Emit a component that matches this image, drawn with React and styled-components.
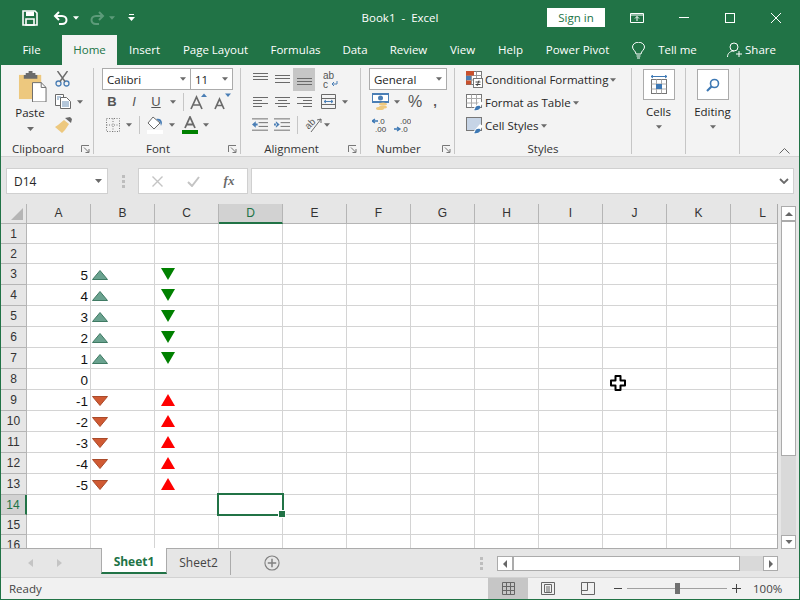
import React from 'react';
import styled, { createGlobalStyle } from 'styled-components';

const GREEN = '#217346';

const Global = createGlobalStyle`
  html, body { margin: 0; padding: 0; background: #e6e6e6; }
  * { box-sizing: border-box; }
  body { font-family: "Open Sans", "Noto Sans", "Liberation Sans", sans-serif; font-size: 11.5px; color: #262626; }
`;

const Win = styled.div`
  width: 800px;
  height: 600px;
  overflow: hidden;
  display: flex;
  flex-direction: column;
  border: 1px solid ${GREEN};
  border-top: 0;
  background: #e6e6e6;
`;

/* title bar */
const TitleBar = styled.div`
  height: 35px;
  background: ${GREEN};
  color: #fff;
  display: grid;
  grid-template-columns: 300px 1fr 300px;
  align-items: center;
`;
const Qat = styled.div`
  display: flex;
  align-items: center;
  padding-left: 21px;
  gap: 4px;
`;
const Title = styled.div`
  text-align: center;
  white-space: pre;
`;
const WinCtl = styled.div`
  display: flex;
  align-items: center;
  justify-content: flex-end;
  padding-right: 18px;
`;
const SignIn = styled.div`
  width: 58px;
  height: 19px;
  background: #fff;
  color: ${GREEN};
  text-align: center;
  line-height: 19px;
  margin-right: 25px;
`;

/* tab bar */
const TabBar = styled.div`
  height: 30px;
  background: ${GREEN};
  color: #fff;
  display: flex;
  align-items: center;
`;
const Tab = styled.div`
  height: 30px;
  width: ${p => p.$w}px;
  line-height: 30px;
  text-align: center;
  white-space: nowrap;
  flex: none;
  background: ${p => (p.$active ? '#f3f3f3' : 'transparent')};
  color: ${p => (p.$active ? GREEN : '#fff')};
`;

/* ribbon */
const Ribbon = styled.div`
  height: 92px;
  background: #f3f3f3;
  border-bottom: 1px solid #d2d2d2;
  display: flex;
  padding-top: 3px;
`;
const Group = styled.div`
  width: ${p => p.$w}px;
  flex: none;
  height: 86px;
  border-right: 1px solid #c6c6c6;
  display: flex;
  flex-direction: column;
  position: relative;
`;
const GroupBody = styled.div`
  flex: 1;
  min-height: 0;
  display: flex;
`;
const GroupLabel = styled.div`
  height: 14px;
  line-height: 18px;
  text-align: center;
  padding-right: ${p => (p.$launch ? 18 : 0)}px;
  color: #333;
`;
const Launcher = styled.svg`
  position: absolute;
  right: 3px;
  bottom: 1px;
`;
const PasteBtn = styled.div`
  width: 44px;
  margin-left: 7px;
  display: flex;
  flex-direction: column;
  align-items: center;
  padding-top: 3px;
`;
const PasteArt = styled.svg`
  margin-left: 4px;
`;
const PasteLabel = styled.div`
  margin: 2px 0 5px;
  line-height: 18px;
`;
const ClipColumn = styled.div`
  padding-left: 2px;
  display: flex;
  flex-direction: column;
`;
const Row = styled.div`
  height: ${p => p.$h || 23}px;
  display: flex;
  align-items: center;
  padding-left: ${p => p.$pl || 0}px;
`;
const Stack = styled.div`
  display: flex;
  flex-direction: column;
  padding-left: ${p => p.$pl || 0}px;
`;
const IconSlot = styled.div`
  width: ${p => p.$w || 22}px;
  height: ${p => p.$h || 22}px;
  flex: none;
  display: flex;
  align-items: center;
  justify-content: center;
  background: ${p => (p.$on ? '#c6c6c6' : 'transparent')};
`;
const Combo = styled.div`
  width: ${p => p.$w}px;
  height: 22px;
  flex: none;
  background: #fff;
  border: 1px solid #ababab;
  margin-left: ${p => (p.$join ? -1 : 0)}px;
  display: flex;
  align-items: center;
  justify-content: space-between;
  padding: 0 4px;
  color: #222;
`;
const VSep = styled.div`
  width: 1px;
  height: 18px;
  background: #c6c6c6;
  margin: 0 ${p => p.$r}px 0 ${p => p.$l}px;
  flex: none;
`;
const Letter = styled.span`
  font-family: "Liberation Sans", sans-serif;
  font-size: ${p => p.$s || 13}px;
  font-weight: ${p => (p.$b ? 700 : 400)};
  font-style: ${p => (p.$i ? 'italic' : 'normal')};
  text-decoration: ${p => (p.$u ? 'underline' : 'none')};
  color: #555;
`;
const StyleRow = styled.div`
  height: 23px;
  display: flex;
  align-items: center;
  gap: 2px;
  padding-left: 11px;
  white-space: nowrap;
`;
const BigBtn = styled.div`
  flex: 1;
  display: flex;
  flex-direction: column;
  align-items: center;
  padding-top: 1px;
`;
const BigIcon = styled.div`
  width: 32px;
  height: 31px;
  background: #fff;
  border: 1px solid #ababab;
  display: flex;
  align-items: center;
  justify-content: center;
`;
const BigText = styled.div`
  margin: 3px 0 4px;
  line-height: 18px;
`;
const RibbonEnd = styled.div`
  flex: 1;
  display: flex;
  align-items: flex-end;
  justify-content: flex-end;
  padding: 0 9px 2px 0;
`;

/* formula bar */
const FormulaBar = styled.div`
  height: 47px;
  display: flex;
  align-items: flex-start;
  padding: 11px 5px 0 5px;
`;
const NameBox = styled.div`
  width: 102px;
  height: 26px;
  background: #fff;
  border: 1px solid #d0d0d0;
  display: flex;
  align-items: center;
  justify-content: space-between;
  padding: 0 5px 0 7px;
  font-size: 12px;
`;
const Dots = styled.div`
  width: 30px;
  height: 26px;
  display: flex;
  align-items: center;
  justify-content: center;
`;
const FxBox = styled.div`
  width: 110px;
  height: 26px;
  background: #fff;
  border: 1px solid #d0d0d0;
  display: flex;
  align-items: center;
`;
const FxSlot = styled.div`
  flex: 1;
  display: flex;
  justify-content: center;
  align-items: center;
`;
const FxText = styled.span`
  font-family: "Liberation Serif", serif;
  font-style: italic;
  font-weight: 700;
  font-size: 13px;
  color: #6a6a6a;
`;
const FormulaInput = styled.div`
  flex: 1;
  height: 26px;
  margin-left: 3px;
  background: #fff;
  border: 1px solid #d0d0d0;
  display: flex;
  align-items: center;
  justify-content: flex-end;
  padding-right: 4px;
`;

/* sheet */
const SheetArea = styled.div`
  height: 345px;
  display: flex;
`;
const SheetClip = styled.div`
  width: 777px;
  height: 345px;
  overflow: hidden;
  position: relative;
  flex: none;
  border-right: 1px solid #ababab;
  border-bottom: 1px solid #ababab;
`;
const Sheet = styled.div`
  display: grid;
  grid-template-columns: 26px repeat(12, 64px);
  grid-template-rows: 20px 20px 20px repeat(11, 21px) 20px 20px 20px;
  width: 794px;
  background: #fff;
`;
const Corner = styled.div`
  background: #e6e6e6;
  border-right: 1px solid #b5b5b5;
  border-bottom: 1px solid #b5b5b5;
  display: flex;
  align-items: flex-end;
  justify-content: flex-end;
  padding: 0 3px 3px 0;
`;
const ColHead = styled.div`
  background: ${p => (p.$sel ? '#d2d2d2' : '#e6e6e6')};
  border-right: 1px solid #b5b5b5;
  border-bottom: ${p => (p.$sel ? `2px solid ${GREEN}` : '1px solid #b5b5b5')};
  color: ${p => (p.$sel ? GREEN : '#333')};
  text-align: center;
  line-height: 19px;
  font-family: "Liberation Sans", sans-serif;
  font-size: 12px;
`;
const RowHead = styled.div`
  background: ${p => (p.$sel ? '#d2d2d2' : '#e6e6e6')};
  border-right: ${p => (p.$sel ? `2px solid ${GREEN}` : '1px solid #b5b5b5')};
  border-bottom: 1px solid #b5b5b5;
  color: ${p => (p.$sel ? GREEN : '#333')};
  display: flex;
  align-items: center;
  justify-content: center;
  font-family: "Liberation Sans", sans-serif;
  font-size: 12px;
`;
const Cell = styled.div`
  border-right: 1px solid #d4d4d4;
  border-bottom: 1px solid #d4d4d4;
  position: relative;
  display: flex;
  align-items: flex-end;
  justify-content: flex-end;
  padding: 0 2px 0 0;
  font-family: "Liberation Sans", sans-serif;
  font-size: 13.5px;
  line-height: 16px;
  color: #111;
`;
const CfIcon = styled.svg`
  position: absolute;
  left: ${p => p.$x}px;
  top: ${p => p.$y}px;
`;
const Selection = styled.div`
  position: absolute;
  left: 216px;
  top: 289px;
  width: 67px;
  height: 23px;
  border: 2px solid ${GREEN};
  &::after {
    content: '';
    position: absolute;
    right: -4px;
    bottom: -4px;
    width: 6px;
    height: 6px;
    background: ${GREEN};
    border: 1px solid #fff;
  }
`;
const Pointer = styled.svg`
  position: absolute;
  left: 609px;
  top: 171px;
`;

/* vertical scrollbar */
const VScroll = styled.div`
  flex: 1;
  display: flex;
  flex-direction: column;
  padding: 2px 3px 0 3px;
  height: 345px;
`;
const SBtn = styled.div`
  flex: none;
  width: ${p => p.$w || 15}px;
  height: ${p => p.$h || 15}px;
  background: #fff;
  border: 1px solid #ababab;
  display: flex;
  align-items: center;
  justify-content: center;
`;
const VTrack = styled.div`
  flex: 1;
  background: #d9d9d9;
`;
const VThumb = styled.div`
  height: 235px;
  background: #fff;
  border: 1px solid #ababab;
`;

/* sheet tabs */
const TabStrip = styled.div`
  height: 28px;
  display: flex;
  align-items: flex-start;
`;
const NavArea = styled.div`
  width: 100px;
  height: 28px;
  display: flex;
  align-items: center;
  padding-left: 27px;
  gap: 24px;
`;
const SheetTab = styled.div`
  width: ${p => p.$w}px;
  height: ${p => (p.$active ? 26 : 24)}px;
  flex: none;
  text-align: center;
  line-height: ${p => (p.$active ? 27 : 23)}px;
  font-size: 12px;
  white-space: nowrap;
  background: ${p => (p.$active ? '#fff' : 'transparent')};
  color: ${p => (p.$active ? GREEN : '#444')};
  font-weight: ${p => (p.$active ? 700 : 400)};
  border-left: ${p => (p.$active ? '1px solid #ababab' : '0')};
  border-right: 1px solid #ababab;
  border-bottom: ${p => (p.$active ? `2px solid ${GREEN}` : '0')};
  margin-top: ${p => (p.$active ? -1 : 2)}px;
  position: relative;
`;
const AddSheet = styled.div`
  width: 249px;
  height: 28px;
  display: flex;
  align-items: center;
  padding-left: 33px;
  flex: none;
`;
const TabDots = styled.div`
  width: 17px;
  height: 28px;
  display: flex;
  align-items: center;
`;
const HScroll = styled.div`
  width: 281px;
  height: 15px;
  margin-top: 7px;
  display: flex;
  background: #d9d9d9;
  flex: none;
`;
const HThumb = styled.div`
  width: 227px;
  background: #fff;
  border: 1px solid #ababab;
  flex: none;
`;
const HTrack = styled.div`
  flex: 1;
`;

/* status bar */
const StatusBar = styled.div`
  flex: 1;
  background: #f1f1f1;
  border-top: 1px solid #d2d2d2;
  display: flex;
  align-items: center;
  color: #444;
  padding-left: 8px;
`;
const Ready = styled.div`
  width: 479px;
  flex: none;
`;
const ViewBtn = styled.div`
  width: 40px;
  height: 21px;
  flex: none;
  display: flex;
  align-items: center;
  justify-content: center;
  background: ${p => (p.$on ? '#c6c6c6' : 'transparent')};
`;
const Zoom = styled.div`
  display: flex;
  align-items: center;
  margin-left: 6px;
  flex: none;
`;
const Slider = styled.div`
  width: 100px;
  height: 1px;
  background: #a0a0a0;
  position: relative;
  margin: 0 5px;
`;
const SliderKnob = styled.div`
  position: absolute;
  left: 48px;
  top: -5px;
  width: 5px;
  height: 11px;
  background: #707070;
`;
const ZoomPct = styled.div`
  margin-left: 12px;
  white-space: nowrap;
`;

const Caret = ({ c = '#6a6a6a', w = 7 }) => (
  <svg width={w} height="4" viewBox="0 0 7 4"><path d="M0 0h7L3.5 4z" fill={c} /></svg>
);

const Lines = ({ rows, w = 15, c = '#6a6a6a' }) => (
  <svg width={w} height="14" viewBox={`0 0 ${w} 14`}>
    {rows.map(([x, y, l], i) => <rect key={i} x={x} y={y} width={l} height="1" fill={c} />)}
  </svg>
);

const Launch = () => (
  <Launcher width="9" height="8" viewBox="0 0 9 8">
    <path d="M.5 7V.5H8M3 2.500l4.500 4.500M8 4v3.500H4.500" fill="none" stroke="#777" />
  </Launcher>
);

const Save = () => (
  <svg width="16" height="16" viewBox="0 0 16 16">
    <path d="M1 1h12l2 2v12H1z" fill="none" stroke="#fff" strokeWidth="1.6" />
    <path d="M4 1.5h8v4.5H4z" fill="#fff" />
    <path d="M4 9h8v6H4z" fill="none" stroke="#fff" strokeWidth="1.6" />
  </svg>
);

const Undo = ({ c = '#fff', flip }) => (
  <svg width="16" height="14" viewBox="0 0 16 14">
    <g transform={flip ? 'translate(16 0) scale(-1 1)' : undefined}>
      <path d="M6 1L2 5l4 4" fill="none" stroke={c} strokeWidth="2" />
      <path d="M2 5h7c6 0 6 8 0 8H6" fill="none" stroke={c} strokeWidth="2" />
    </g>
  </svg>
);

const PasteIcon = () => (
  <PasteArt width="29" height="31" viewBox="0 0 30 32">
    <path d="M1 4h23v25H1z" fill="#edc87e" />
    <path d="M8 4V2h3V0h4v2h3v2h2v4H6V4z" fill="#6b6b6b" />
    <path d="M15 12h9l5 5v15H15z" fill="#fff" stroke="#6b6b6b" />
    <path d="M24 12v5h5" fill="none" stroke="#6b6b6b" />
  </PasteArt>
);

const CutIcon = () => (
  <svg width="15" height="16" viewBox="0 0 15 16">
    <circle cx="3.5" cy="12.5" r="2.5" fill="none" stroke="#4a7eb5" strokeWidth="1.3" />
    <circle cx="11.5" cy="12.5" r="2.5" fill="none" stroke="#4a7eb5" strokeWidth="1.3" />
    <path d="M2.5 0l7.5 10.5M12.5 0L5 10.5" stroke="#6a6a6a" strokeWidth="1.4" />
  </svg>
);

const CopyIcon = () => (
  <svg width="16" height="15" viewBox="0 0 16 15">
    <path d="M.5.5h8v11h-8z" fill="#fff" stroke="#6a6a6a" />
    <path d="M5.5 3.5h6l4 4v7h-10z" fill="#fff" stroke="#6a6a6a" />
    <path d="M7 8h7M7 10h7M7 12h7M2 3h4M2 5h2" stroke="#6a8fb5" />
  </svg>
);

const Brush = () => (
  <svg width="17" height="16" viewBox="0 0 17 16">
    <path d="M10 1l5-1 2 2-1 4z" fill="#6a6a6a" />
    <path d="M9 3l5 4-4 6-3 3-7-6 3-2z" fill="#edc87e" />
  </svg>
);

const BordersIcon = () => (
  <svg width="14" height="14" viewBox="0 0 14 14">
    <path d="M.5.5h13v13H.5zM7 .5v13M.5 7h13" fill="none" stroke="#777" strokeDasharray="1 1.500" />
  </svg>
);

const FillIcon = () => (
  <svg width="16" height="18" viewBox="0 0 16 18">
    <path d="M6 1l7 6-6 6-6-6z" fill="#fff" stroke="#6a6a6a" />
    <path d="M9 3c3-1 6 0 6 4l-1 3-1-4z" fill="#4a7eb5" />
    <rect x="0" y="14" width="16" height="4" fill="#fff" />
  </svg>
);

const FontColor = () => (
  <svg width="16" height="18" viewBox="0 0 16 18">
    <path d="M3 12L8 1l5 11M5 8.5h6" fill="none" stroke="#6a6a6a" strokeWidth="1.8" />
    <rect x="0" y="14" width="16" height="4" fill="#008000" />
  </svg>
);

const GrowFont = ({ up }) => (
  <svg width="20" height="17" viewBox="0 0 20 17">
    <path d={up ? 'M1 16L6.5 4 12 16M3.5 12h6' : 'M3 16L7.5 6 12 16M5 12.5h5'} fill="none" stroke="#6a6a6a" strokeWidth="1.7" />
    <path d={up ? 'M11 4l3-3.5L17 4z' : 'M13 .5h6L16 4z'} fill="#4a7eb5" />
  </svg>
);

const WrapIcon = () => (
  <svg width="16" height="20" viewBox="0 0 16 20">
    <text fontFamily="Liberation Sans" fontSize="10" fill="#555">
      <tspan x="0" y="10">ab</tspan>
      <tspan x="0" y="18.500">c</tspan>
    </text>
    <path d="M14 12v3H9m2-2l-2 2 2 2" fill="none" stroke="#4a7eb5" />
  </svg>
);

const MergeIcon = () => (
  <svg width="15" height="15" viewBox="0 0 15 15">
    <path d="M.5.5h14v14H.5zM.5 4.5h14M.5 10.5h14" fill="none" stroke="#6a6a6a" />
    <path d="M3 7.5h9M3 7.5L5 6M3 7.5L5 9M12 7.5L10 6M12 7.5L10 9" stroke="#4a7eb5" fill="none" />
  </svg>
);

const IndentIcon = ({ out }) => (
  <svg width="16" height="14" viewBox="0 0 17 14">
    <path d="M0 .5h17M7 4.5h10M7 8.5h10M0 12.5h17" stroke="#6a6a6a" />
    <path d={out ? 'M0 6.5L4 3v7zM3 5.5h3v2H3z' : 'M6 6.5L2 3v7zM0 5.5h3v2H0z'} fill="#4a7eb5" />
  </svg>
);

const OrientIcon = () => (
  <svg width="16" height="18" viewBox="0 0 16 18" overflow="visible">
    <text x="0" y="11" fontFamily="Liberation Sans" fontSize="9.500" fill="#555" transform="rotate(-45 5 8)">ab</text>
    <path d="M6 16L16 3M16 3l-4 1M16 3v4" fill="none" stroke="#6a6a6a" />
  </svg>
);

const CurrencyIcon = () => (
  <svg width="17" height="17" viewBox="0 0 17 17">
    <rect x=".5" y=".5" width="16" height="9" fill="#fff" stroke="#4a7eb5" />
    <path d="M0 0h17v2H0zM0 8h17v2H0z" fill="#4a7eb5" />
    <circle cx="8.5" cy="5" r="2.5" fill="#4a7eb5" />
    <ellipse cx="11" cy="11" rx="4" ry="1.6" fill="#edc87e" />
    <ellipse cx="11" cy="14" rx="4" ry="1.6" fill="#edc87e" />
    <ellipse cx="8" cy="15.4" rx="4" ry="1.6" fill="#edc87e" />
  </svg>
);

const DecimalIcon = ({ more }) => (
  <svg width="17" height="16" viewBox="0 0 17 16">
    <text x="6" y="7" fontFamily="Liberation Sans" fontSize="8" fill="#444">{more ? '.00' : '.0'}</text>
    <text x={more ? 7 : 3} y="15" fontFamily="Liberation Sans" fontSize="8" fill="#444">{more ? '.0' : '.00'}</text>
    <path d={more ? 'M0 12h5M3 10l3 2-3 2' : 'M1 4h5M3 2L0 4l3 2'} fill="none" stroke="#3d78b4" strokeWidth="1.3" />
  </svg>
);

const CondFmtIcon = () => (
  <svg width="17" height="17" viewBox="0 0 17 17">
    <rect x=".5" y=".5" width="15" height="13" fill="#fff" stroke="#777" />
    <path d="M.5 4.5h15M.5 9h15M5.5.5v13M10.5.5v13" stroke="#999" fill="none" />
    <rect x="0" y="0" width="8" height="4.5" fill="#c8502d" />
    <rect x="0" y="5" width="5" height="4" fill="#4a7eb5" />
    <rect x="0" y="9.5" width="5" height="4" fill="#c8502d" />
    <rect x="7.5" y="7.5" width="9" height="9" fill="#fff" stroke="#777" />
    <path d="M9.5 11h5M9.5 13.5h5M13 9.5l-2 5.5" stroke="#444" fill="none" />
  </svg>
);

const TableIcon = ({ cell }) => (
  <svg width="17" height="17" viewBox="0 0 17 17">
    <rect x=".5" y=".5" width="15" height="13" fill={cell ? '#c6d4e6' : '#fff'} stroke="#777" />
    {!cell && <path d="M.5 4.5h15M.5 9h15M5.5.5v13M10.5.5v13" stroke="#aaa" fill="none" />}
    <path d="M7 15l7-8 3 2-6 8z" fill="#fff" />
    <path d="M9 15c0-3 3-4 5-3 1 2-1 5-6 4z" fill="#3d78b4" />
  </svg>
);

const CellsIcon = () => (
  <svg width="20" height="20" viewBox="0 0 20 20">
    <path d="M2 1.5h16M2 1.5L4 0M2 1.5L4 3M18 1.5L16 0M18 1.5L16 3" stroke="#3d78b4" fill="none" />
    <rect x="2.5" y="4.5" width="15" height="14" fill="#fff" stroke="#777" />
    <path d="M2.5 9h15M2.5 14h15M7.5 4.5v14M12.5 4.5v14" stroke="#aaa" />
    <rect x="7" y="9" width="6" height="5" fill="#3d78b4" />
  </svg>
);

const SearchIcon = () => (
  <svg width="14" height="14" viewBox="0 0 14 14">
    <circle cx="8.5" cy="5.5" r="4" fill="none" stroke="#3d78b4" strokeWidth="1.6" />
    <path d="M5.5 8.5L1 13" stroke="#3d78b4" strokeWidth="2.2" />
  </svg>
);

const cols = 'ABCDEFGHIJKL'.split('');
const rows = Array.from({ length: 16 }, (_, i) => i + 1);
const values = { 3: 5, 4: 4, 5: 3, 6: 2, 7: 1, 8: 0, 9: -1, 10: -2, 11: -3, 12: -4, 13: -5 };

function cellContent(r, c) {
  const v = values[r];
  if (v === undefined) return null;
  if (c === 'A') return v;
  if (v === 0) return null;
  if (c === 'B') {
    return (
      <CfIcon $x={1} $y={6} width="16" height="10" viewBox="0 0 16 10">
        {v > 0
          ? <path d="M8 .5L15.5 9.5H.5z" fill="#6aa28f" stroke="#3f7a63" />
          : <path d="M.5.5h15L8 9.500z" fill="#d05a33" stroke="#a94a2a" />}
      </CfIcon>
    );
  }
  if (c === 'C') {
    return (
      <CfIcon $x={6} $y={4} width="14" height="12" viewBox="0 0 14 12">
        {v > 0
          ? <path d="M0 0h14L7 12z" fill="#008000" />
          : <path d="M7 0l7 12H0z" fill="#ff0000" />}
      </CfIcon>
    );
  }
  return null;
}

export default function App() {
  return (
    <>
      <Global />
      <Win>
        <TitleBar>
          <Qat>
            <Save />
            <IconSlot $w={7} />
            <Undo />
            <Caret c="#fff" w={6} />
            <IconSlot $w={2} />
            <Undo flip c="#5d9b7a" />
            <Caret c="#5d9b7a" w={6} />
            <IconSlot $w={5} />
            <svg width="7" height="7" viewBox="0 0 7 7"><path d="M1 0h5v1H1zM0 3h7L3.5 7z" fill="#fff" /></svg>
          </Qat>
          <Title>Book1  -  Excel</Title>
          <WinCtl>
            <SignIn>Sign in</SignIn>
            <svg width="14" height="10" viewBox="0 0 14 10">
              <path d="M.5.5h13v9H.5zM.5 2h13M7 8V3.5M5 5.5l2-2 2 2" fill="none" stroke="#fff" />
            </svg>
            <IconSlot $w={35} />
            <svg width="10" height="1" viewBox="0 0 10 1"><rect width="10" height="1" fill="#fff" /></svg>
            <IconSlot $w={36} />
            <svg width="10" height="10" viewBox="0 0 10 10"><rect x=".5" y=".5" width="9" height="9" fill="none" stroke="#fff" /></svg>
            <IconSlot $w={36} />
            <svg width="10" height="10" viewBox="0 0 10 10"><path d="M0 0l10 10M10 0L0 10" stroke="#fff" /></svg>
          </WinCtl>
        </TitleBar>
        <TabBar>
          <Tab $w={61}>File</Tab>
          <Tab $w={55} $active>Home</Tab>
          <Tab $w={55}>Insert</Tab>
          <Tab $w={87}>Page Layout</Tab>
          <Tab $w={73}>Formulas</Tab>
          <Tab $w={46}>Data</Tab>
          <Tab $w={61}>Review</Tab>
          <Tab $w={47}>View</Tab>
          <Tab $w={49}>Help</Tab>
          <Tab $w={85}>Power Pivot</Tab>
          <IconSlot $w={37} $h={30}>
            <svg width="13" height="17" viewBox="0 0 13 17">
              <path d="M4 12c0-3-3.5-4-3.500-7a6 4.800 0 0 1 12 0c0 3-3.500 4-3.500 7zM4.500 14h4M5 16h3" fill="none" stroke="#fff" />
            </svg>
          </IconSlot>
          <Tab $w={41}>Tell me</Tab>
          <IconSlot $w={29} $h={30} />
          <IconSlot $w={16} $h={30}>
            <svg width="16" height="16" viewBox="0 0 16 16">
              <circle cx="7" cy="5" r="4" fill="none" stroke="#fff" />
              <path d="M.5 15c0-4 3-6 6.500-6M12 9v6M9 12h6" fill="none" stroke="#fff" />
            </svg>
          </IconSlot>
          <Tab $w={35}>Share</Tab>
        </TabBar>

        <Ribbon>
          <Group $w={93}>
            <GroupBody>
              <PasteBtn>
                <PasteIcon />
                <PasteLabel>Paste</PasteLabel>
                <Caret />
              </PasteBtn>
              <ClipColumn>
                <Row $h={22} $pl={1}><CutIcon /></Row>
                <Row $pl={1}><CopyIcon /><IconSlot $w={6} /><Caret w={6} /></Row>
                <Row $pl={1}><Brush /></Row>
              </ClipColumn>
            </GroupBody>
            <GroupLabel $launch>Clipboard</GroupLabel>
            <Launch />
          </Group>
          <Group $w={147}>
            <GroupBody>
              <Stack>
                <Row $h={22} $pl={8}>
                  <Combo $w={89}>Calibri<Caret w={6} /></Combo>
                  <Combo $w={43} $join>11<Caret w={6} /></Combo>
                </Row>
                <Row $pl={7}>
                  <IconSlot><Letter $b>B</Letter></IconSlot>
                  <IconSlot><Letter $i>I</Letter></IconSlot>
                  <IconSlot><Letter $u>U</Letter></IconSlot>
                  <IconSlot $w={3} />
                  <Caret w={6} />
                  <VSep $l={7} $r={5} />
                  <IconSlot><GrowFont up /></IconSlot>
                  <IconSlot><GrowFont /></IconSlot>
                </Row>
                <Row $pl={12}>
                  <BordersIcon />
                  <IconSlot $w={6} />
                  <Caret w={6} />
                  <VSep $l={7} $r={7} />
                  <FillIcon />
                  <IconSlot $w={6} />
                  <Caret w={6} />
                  <IconSlot $w={7} />
                  <FontColor />
                  <IconSlot $w={5} />
                  <Caret w={6} />
                </Row>
              </Stack>
            </GroupBody>
            <GroupLabel $launch>Font</GroupLabel>
            <Launch />
          </Group>
          <Group $w={120}>
            <GroupBody>
              <Stack $pl={8}>
                <Row $h={22}>
                  <IconSlot><Lines rows={[[0, 1, 15], [0, 4, 15], [0, 7, 15]]} /></IconSlot>
                  <IconSlot><Lines rows={[[0, 3, 15], [0, 6, 15], [0, 10, 15]]} /></IconSlot>
                  <IconSlot $h={23} $on><Lines rows={[[0, 6, 15], [0, 9, 15], [0, 12, 15]]} /></IconSlot>
                  <IconSlot $w={8} />
                  <WrapIcon />
                </Row>
                <Row>
                  <IconSlot><Lines rows={[[0, 2, 15], [0, 5, 9], [0, 8, 15], [0, 11, 9]]} /></IconSlot>
                  <IconSlot><Lines rows={[[0, 2, 15], [3, 5, 9], [0, 8, 15], [3, 11, 9]]} /></IconSlot>
                  <IconSlot><Lines rows={[[0, 2, 15], [6, 5, 9], [0, 8, 15], [6, 11, 9]]} /></IconSlot>
                  <IconSlot $w={6} />
                  <MergeIcon />
                  <IconSlot $w={6} />
                  <Caret w={6} />
                </Row>
                <Row>
                  <IconSlot><IndentIcon out /></IconSlot>
                  <IconSlot><IndentIcon /></IconSlot>
                  <VSep $l={4} $r={7} />
                  <OrientIcon />
                  <IconSlot $w={3} />
                  <Caret w={6} />
                </Row>
              </Stack>
            </GroupBody>
            <GroupLabel $launch>Alignment</GroupLabel>
            <Launch />
          </Group>
          <Group $w={94}>
            <GroupBody>
              <Stack $pl={8}>
                <Row $h={22}><Combo $w={78}>General<Caret w={6} /></Combo></Row>
                <Row $pl={3}>
                  <CurrencyIcon />
                  <IconSlot $w={5} />
                  <Caret w={6} />
                  <IconSlot $w={30} $h={20}><Letter $s={16}>%</Letter></IconSlot>
                  <IconSlot $w={10} $h={20}><Letter $b>,</Letter></IconSlot>
                </Row>
                <Row $pl={3}>
                  <DecimalIcon />
                  <IconSlot $w={5} />
                  <DecimalIcon more />
                </Row>
              </Stack>
            </GroupBody>
            <GroupLabel $launch>Number</GroupLabel>
            <Launch />
          </Group>
          <Group $w={177}>
            <GroupBody>
              <Stack>
                <StyleRow><CondFmtIcon />Conditional Formatting<Caret w={6} /></StyleRow>
                <StyleRow><TableIcon />Format as Table<Caret w={6} /></StyleRow>
                <StyleRow><TableIcon cell />Cell Styles<Caret w={6} /></StyleRow>
              </Stack>
            </GroupBody>
            <GroupLabel>Styles</GroupLabel>
          </Group>
          <Group $w={54}>
            <BigBtn>
              <BigIcon><CellsIcon /></BigIcon>
              <BigText>Cells</BigText>
              <Caret w={6} />
            </BigBtn>
          </Group>
          <Group $w={54}>
            <BigBtn>
              <BigIcon><SearchIcon /></BigIcon>
              <BigText>Editing</BigText>
              <Caret w={6} />
            </BigBtn>
          </Group>
          <RibbonEnd>
            <svg width="11" height="6" viewBox="0 0 11 6"><path d="M.5 5.500l5-5 5 5" fill="none" stroke="#666" /></svg>
          </RibbonEnd>
        </Ribbon>

        <FormulaBar>
          <NameBox>D14<Caret w={7} /></NameBox>
          <Dots>
            <svg width="3" height="13" viewBox="0 0 3 13"><path d="M0 0h3v3H0zM0 5h3v3H0zM0 10h3v3H0z" fill="#bdbdbd" /></svg>
          </Dots>
          <FxBox>
            <FxSlot>
              <svg width="11" height="11" viewBox="0 0 11 11"><path d="M.5.5l10 10M10.500.5l-10 10" stroke="#c4c4c4" strokeWidth="1.400" /></svg>
            </FxSlot>
            <FxSlot>
              <svg width="13" height="11" viewBox="0 0 13 11"><path d="M1 6l4 4 7-9" fill="none" stroke="#c4c4c4" strokeWidth="2" /></svg>
            </FxSlot>
            <FxSlot><FxText>fx</FxText></FxSlot>
          </FxBox>
          <FormulaInput>
            <svg width="10" height="6" viewBox="0 0 10 6"><path d="M1 1l4 4 4-4" fill="none" stroke="#6a6a6a" strokeWidth="1.800" /></svg>
          </FormulaInput>
        </FormulaBar>

        <SheetArea>
          <SheetClip>
            <Sheet>
              <Corner>
                <svg width="12" height="12" viewBox="0 0 12 12"><path d="M12 0v12H0z" fill="#b5b5b5" /></svg>
              </Corner>
              {cols.map(c => <ColHead key={c} $sel={c === 'D'}>{c}</ColHead>)}
              {rows.map(r => (
                <React.Fragment key={r}>
                  <RowHead $sel={r === 14}>{r}</RowHead>
                  {cols.map(c => <Cell key={c}>{cellContent(r, c)}</Cell>)}
                </React.Fragment>
              ))}
            </Sheet>
            <Selection />
            <Pointer width="16" height="16" viewBox="0 0 16 16">
              <path d="M5.500 1h5v4.500H15v5h-4.500V15h-5v-4.500H1v-5h4.500z" fill="#fff" stroke="#000" strokeWidth="2" strokeLinejoin="round" />
            </Pointer>
          </SheetClip>
          <VScroll>
            <SBtn><svg width="8" height="4" viewBox="0 0 8 4"><path d="M0 4h8L4 0z" fill="#666" /></svg></SBtn>
            <VTrack><VThumb /></VTrack>
            <SBtn $h={14}><Caret w={8} /></SBtn>
          </VScroll>
        </SheetArea>

        <TabStrip>
          <NavArea>
            <svg width="5" height="8" viewBox="0 0 5 8"><path d="M5 0v8L0 4z" fill="#c4c4c4" /></svg>
            <svg width="5" height="8" viewBox="0 0 5 8"><path d="M0 0v8l5-4z" fill="#c4c4c4" /></svg>
          </NavArea>
          <SheetTab $w={66} $active>Sheet1</SheetTab>
          <SheetTab $w={64}>Sheet2</SheetTab>
          <AddSheet>
            <svg width="16" height="16" viewBox="0 0 17 17">
              <circle cx="8.500" cy="8.500" r="7.500" fill="none" stroke="#808080" strokeWidth="1.200" />
              <path d="M8.500 4v9M4 8.500h9" stroke="#808080" strokeWidth="1.600" />
            </svg>
          </AddSheet>
          <TabDots>
            <svg width="3" height="13" viewBox="0 0 3 13"><path d="M0 0h3v3H0zM0 5h3v3H0zM0 10h3v3H0z" fill="#bdbdbd" /></svg>
          </TabDots>
          <HScroll>
            <SBtn $w={16}><svg width="4" height="8" viewBox="0 0 4 8"><path d="M4 0v8L0 4z" fill="#666" /></svg></SBtn>
            <HThumb />
            <HTrack />
            <SBtn><svg width="4" height="8" viewBox="0 0 4 8"><path d="M0 0v8l4-4z" fill="#666" /></svg></SBtn>
          </HScroll>
        </TabStrip>

        <StatusBar>
          <Ready>Ready</Ready>
          <ViewBtn $on>
            <svg width="13" height="13" viewBox="0 0 13 13"><path d="M.5.5h12v12H.5zM4.500.5v12M8.500.5v12M.5 4.500h12M.5 8.500h12" fill="none" stroke="#666" /></svg>
          </ViewBtn>
          <ViewBtn>
            <svg width="14" height="13" viewBox="0 0 14 13"><path d="M.5.5h13v12H.5zM3.500 2.500h7v8h-7zM5 5h4M5 7h4M5 9h4" fill="none" stroke="#666" /></svg>
          </ViewBtn>
          <ViewBtn>
            <svg width="14" height="13" viewBox="0 0 14 13"><path d="M.5.5h13v12H.5zM.5 8.500h6V.5" fill="none" stroke="#666" /></svg>
          </ViewBtn>
          <Zoom>
            <svg width="8" height="1" viewBox="0 0 8 1"><rect width="8" height="1" fill="#444" /></svg>
            <Slider><SliderKnob /></Slider>
            <svg width="9" height="9" viewBox="0 0 9 9"><path d="M0 4.500h9M4.500 0v9" stroke="#444" /></svg>
            <ZoomPct>100%</ZoomPct>
          </Zoom>
        </StatusBar>
      </Win>
    </>
  );
}
